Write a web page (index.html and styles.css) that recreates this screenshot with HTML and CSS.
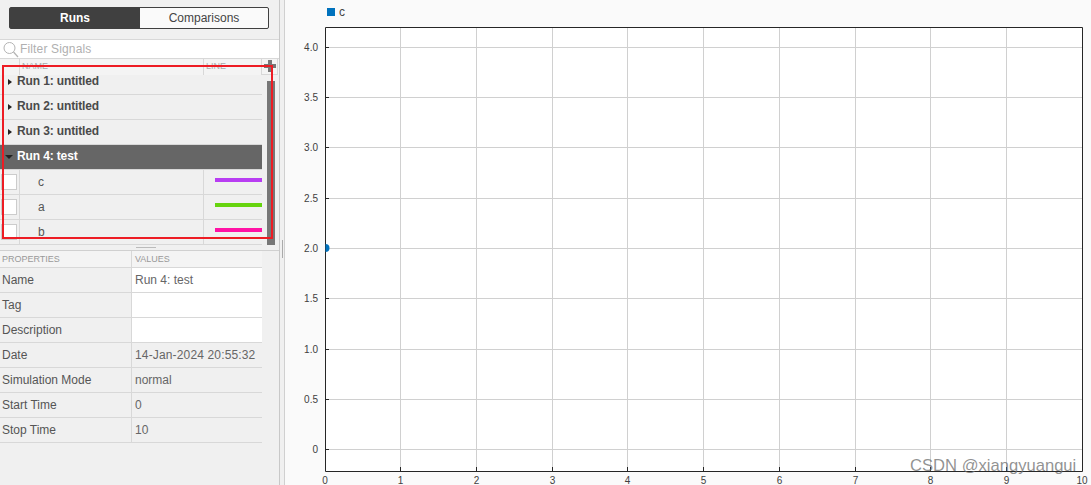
FILE: index.html
```html
<!DOCTYPE html>
<html lang="en">
<head>
    <title>Simulation Data Inspector</title>
    <meta charset="utf-8">
    <link rel="stylesheet" href="styles.css">
</head>
<body>
<div class="app">
    <div class="sidebar">
        <!-- Runs / Comparisons switch -->
        <div class="tabs-bar">
            <div class="tabs">
                <div class="tab tab-active">Runs</div>
                <div class="tab">Comparisons</div>
            </div>
        </div>

        <div class="filter">
            <svg class="search-icon" width="18" height="19" viewBox="0 0 18 19">
                <circle cx="8.5" cy="8" r="5.5" fill="none" stroke="#b4b4b4" stroke-width="1"/>
                <path d="M12.5 12 L17 17" fill="none" stroke="#b4b4b4" stroke-width="1.2"/>
            </svg>
            <span>Filter Signals</span>
        </div>

        <div class="tree-head">
            <div class="cell"></div>
            <div class="cell head-label">NAME</div>
            <div class="cell head-label">LINE</div>
            <div class="plus-cell"><div class="plus"></div></div>
        </div>

        <div class="tree-wrap">
            <div class="tree">
                <div class="run run-first"><span class="arrow-right"></span>Run 1: untitled</div>
                <div class="run"><span class="arrow-right"></span>Run 2: untitled</div>
                <div class="run"><span class="arrow-right"></span>Run 3: untitled</div>
                <div class="run run-open"><span class="arrow-down"></span>Run 4: test</div>
                <div class="signal">
                    <div class="check-cell"><div class="check"></div></div>
                    <div class="signal-name">c</div>
                    <div class="line-cell"><div class="line line-c"></div></div>
                </div>
                <div class="signal">
                    <div class="check-cell"><div class="check"></div></div>
                    <div class="signal-name">a</div>
                    <div class="line-cell"><div class="line line-a"></div></div>
                </div>
                <div class="signal">
                    <div class="check-cell"><div class="check"></div></div>
                    <div class="signal-name">b</div>
                    <div class="line-cell"><div class="line line-b"></div></div>
                </div>
            </div>
            <div class="scroll"><div class="thumb"></div></div>
        </div>

        <div class="h-split"><div class="h-grip"></div></div>

        <!-- Properties of the selected run -->
        <div class="props">
            <div class="prop prop-head"><div class="prop-key">PROPERTIES</div><div class="prop-val">VALUES</div></div>
            <div class="prop"><div class="prop-key">Name</div><div class="prop-val val-edit">Run 4: test</div></div>
            <div class="prop"><div class="prop-key">Tag</div><div class="prop-val val-edit"></div></div>
            <div class="prop"><div class="prop-key">Description</div><div class="prop-val val-edit"></div></div>
            <div class="prop"><div class="prop-key">Date</div><div class="prop-val val-date">14-Jan-2024 20:55:32</div></div>
            <div class="prop"><div class="prop-key">Simulation Mode</div><div class="prop-val">normal</div></div>
            <div class="prop"><div class="prop-key">Start Time</div><div class="prop-val">0</div></div>
            <div class="prop"><div class="prop-key">Stop Time</div><div class="prop-val">10</div></div>
        </div>

        <div class="callout"></div>
    </div>

    <div class="v-split"><div class="v-grip"></div></div>

    <div class="plot">
        <div class="legend"><span class="legend-box"></span><span>c</span></div>
        <svg class="chart" width="806" height="458" viewBox="0 0 806 458">
            <rect x="40" y="0" width="757" height="444" fill="#fff"/>
            <g stroke="#d0d0d0" stroke-width="1">
                <path d="M115.5 0V444M191.5 0V444M267.5 0V444M342.5 0V444M418.5 0V444M494.5 0V444M570.5 0V444M645.5 0V444M721.5 0V444"/>
                <path d="M40 20.5H797M40 70.5H797M40 120.5H797M40 171.5H797M40 221.5H797M40 271.5H797M40 322.5H797M40 372.5H797M40 422.5H797"/>
            </g>
            <g stroke="#262626" stroke-width="1" fill="none">
                <path d="M40.5 444.5V0.5H797.5V444.5H40.5"/>
                <path d="M40 20.5h4M40 70.5h4M40 120.5h4M40 171.5h4M40 221.5h4M40 271.5h4M40 322.5h4M40 372.5h4M40 422.5h4"/>
                <path d="M115.5 444v-4M191.5 444v-4M267.5 444v-4M342.5 444v-4M418.5 444v-4M494.5 444v-4M570.5 444v-4M645.5 444v-4M721.5 444v-4"/>
            </g>
            <path d="M40.5 217 A4 4 0 0 1 40.5 225 Z" fill="#0072bd"/>
            <g class="y-labels">
                <text x="33" y="24">4.0</text>
                <text x="33" y="74">3.5</text>
                <text x="33" y="124">3.0</text>
                <text x="33" y="175">2.5</text>
                <text x="33" y="225">2.0</text>
                <text x="33" y="275">1.5</text>
                <text x="33" y="326">1.0</text>
                <text x="33" y="376">0.5</text>
                <text x="33" y="426">0</text>
            </g>
            <g class="x-labels">
                <text x="40" y="457">0</text>
                <text x="115.5" y="457">1</text>
                <text x="191.5" y="457">2</text>
                <text x="267.5" y="457">3</text>
                <text x="342.5" y="457">4</text>
                <text x="418.5" y="457">5</text>
                <text x="494.5" y="457">6</text>
                <text x="570.5" y="457">7</text>
                <text x="645.5" y="457">8</text>
                <text x="721.5" y="457">9</text>
                <text x="797" y="457">10</text>
            </g>
        </svg>
    </div>

    <div class="watermark">CSDN @xiangyuangui</div>
</div>
</body>
</html>
```

FILE: styles.css
```css
html, body {
    margin: 0;
    padding: 0;
    overflow: hidden;
}
body {
    font-family: "Liberation Sans", Arial, sans-serif;
    font-size: 12px;
    color: #555;
    background-color: #fafafa;
}
.app {
    display: flex;
    position: relative;
    width: 1091px;
    height: 485px;
}

/* left panel */
.sidebar {
    position: relative;
    display: flex;
    flex-direction: column;
    flex: none;
    box-sizing: border-box;
    width: 280px;
    height: 485px;
    background-color: #f0f0f0;
    border-right: 1px solid #c8c8c8;
}
.tabs-bar {
    box-sizing: border-box;
    height: 39px;
    padding: 7px 0 0 9px;
}
.tabs {
    display: flex;
    box-sizing: border-box;
    width: 260px;
    height: 22px;
    border: 1px solid #404040;
    border-radius: 2px;
    background-color: #fafafa;
}
.tab {
    flex: 1;
    line-height: 20px;
    text-align: center;
    color: #444;
}
.tab-active {
    flex: none;
    width: 130px;
    background-color: #404040;
    color: #fff;
    font-weight: bold;
}

.filter {
    display: flex;
    align-items: center;
    box-sizing: border-box;
    height: 20px;
    border-top: 1px solid #d8d8d8;
    border-bottom: 1px solid #d8d8d8;
    background-color: #fff;
    color: #b0b0b0;
    letter-spacing: 0.15px;
}
.search-icon {
    flex: none;
    margin-left: 1px;
    margin-right: 1px;
}

.tree-head {
    display: grid;
    grid-template-columns: 20px 184px 58px 16px;
    height: 16px;
    font-size: 9px;
    color: #aaa;
    background-color: #f4f4f4;
}
.cell {
    border-right: 1px solid #d8d8d8;
    line-height: 15px;
}
.head-label {
    padding-left: 2px;
}
.plus-cell {
    border-bottom: 1px solid #d8d8d8;
    border-right: 1px solid #d8d8d8;
}
.plus {
    width: 12px;
    height: 12px;
    margin: 1px 0 0 2px;
    background:
        linear-gradient(#777, #777) center / 12px 4px no-repeat,
        linear-gradient(#777, #777) center / 4px 12px no-repeat;
}

.tree-wrap {
    display: flex;
    height: 170px;
    overflow: hidden;
}
.tree {
    flex: none;
    width: 262px;
}
.run {
    position: relative;
    box-sizing: border-box;
    height: 25px;
    padding: 4px 0 0 17px;
    line-height: 15px;
    font-weight: bold;
    letter-spacing: -0.13px;
    color: #4a4a4a;
    background-color: #f0f0f0;
    border-bottom: 1px solid #d8d8d8;
}
.run-first {
    margin-top: -5px;
}
.run-open {
    background-color: #666;
    color: #fff;
}
.arrow-right {
    position: absolute;
    left: 8px;
    top: 9px;
    border-left: 4px solid #222;
    border-top: 3.5px solid transparent;
    border-bottom: 3.5px solid transparent;
}
.arrow-down {
    position: absolute;
    left: 5px;
    top: 10px;
    border-top: 4px solid #222;
    border-left: 4px solid transparent;
    border-right: 4px solid transparent;
}
.signal {
    display: grid;
    grid-template-columns: 20px 184px 58px;
    box-sizing: border-box;
    height: 25px;
    border-bottom: 1px solid #d8d8d8;
}
.check-cell {
    border-right: 1px solid #d8d8d8;
    padding: 4px 0 0 1px;
}
.check {
    box-sizing: border-box;
    width: 16px;
    height: 16px;
    border: 1px solid #ccc;
    background-color: #fff;
}
.signal-name {
    padding: 5px 0 0 18px;
    line-height: 15px;
    border-right: 1px solid #d8d8d8;
}
.line-cell {
    padding: 8px 0 0 11px;
}
.line {
    height: 4px;
}
.line-c { background-color: #b83df2; }
.line-a { background-color: #66d40e; }
.line-b { background-color: #ff12a5; }

.scroll {
    flex: none;
    padding: 6px 0 0 5px;
}
.thumb {
    width: 8px;
    height: 164px;
    background-color: #777;
}

.h-split {
    display: flex;
    justify-content: center;
    box-sizing: border-box;
    height: 6px;
    padding: 2px 0 0 12px;
    border-bottom: 1px solid #d0d0d0;
}
.h-grip {
    width: 20px;
    height: 1px;
    background-color: #bbb;
}

.props {
    width: 262px;
}
.prop {
    display: grid;
    grid-template-columns: 132px 130px;
    box-sizing: border-box;
    height: 25px;
    line-height: 24px;
    border-bottom: 1px solid #d8d8d8;
}
.prop-head {
    height: 17px;
    line-height: 16px;
    font-size: 9px;
    color: #999;
    background-color: #f4f4f4;
}
.prop-key {
    padding-left: 2px;
    border-right: 1px solid #d8d8d8;
}
.prop-val {
    padding-left: 3px;
    color: #666;
}
.prop-head .prop-val {
    color: #999;
}
.val-edit {
    background-color: #fff;
}
.val-date {
    letter-spacing: 0.15px;
}

/* red box drawn on top of the screenshot */
.callout {
    position: absolute;
    left: 2px;
    top: 65px;
    box-sizing: border-box;
    width: 271px;
    height: 174px;
    border: 2px solid #ed1c24;
}

.v-split {
    flex: none;
    box-sizing: border-box;
    width: 5px;
    background-color: #f0f0f0;
    border-right: 1px solid #d0d0d0;
    padding: 240px 0 0 2px;
}
.v-grip {
    width: 1px;
    height: 18px;
    background-color: #aaa;
}

/* plot */
.plot {
    flex: none;
    width: 806px;
}
.legend {
    display: flex;
    align-items: center;
    gap: 4px;
    box-sizing: border-box;
    height: 27px;
    padding: 0 0 3px 42px;
    font-size: 12px;
    color: #444;
}
.legend-box {
    width: 8px;
    height: 8px;
    background-color: #0072bd;
}
.chart {
    display: block;
}
.chart text {
    font-family: "Liberation Sans", Arial, sans-serif;
    font-size: 10px;
    fill: #404040;
}
.y-labels text {
    text-anchor: end;
}
.x-labels text {
    text-anchor: middle;
}

.watermark {
    position: absolute;
    left: 910px;
    top: 456px;
    font-size: 16.6px;
    line-height: 20px;
    color: rgba(110, 110, 110, 0.75);
    white-space: nowrap;
}
```
